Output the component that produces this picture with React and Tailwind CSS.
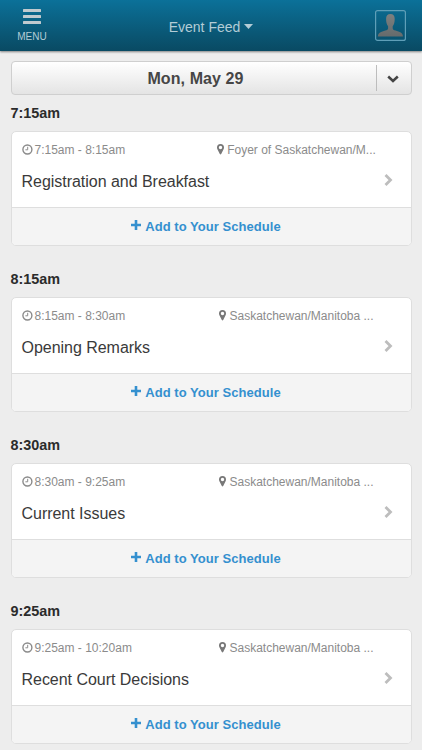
const events = [
    { start: '7:15am', time: '7:15am - 8:15am', place: 'Foyer of Saskatchewan/M...', title: 'Registration and Breakfast' },
    { start: '8:15am', time: '8:15am - 8:30am', place: 'Saskatchewan/Manitoba ...', title: 'Opening Remarks' },
    { start: '8:30am', time: '8:30am - 9:25am', place: 'Saskatchewan/Manitoba ...', title: 'Current Issues' },
    { start: '9:25am', time: '9:25am - 10:20am', place: 'Saskatchewan/Manitoba ...', title: 'Recent Court Decisions' },
]

function ClockIcon() {
    return (
        <svg className="w-[11px] h-[11px] mr-[2px] mb-[2px] shrink-0" viewBox="0 0 11 11" fill="none" stroke="currentColor">
            <circle cx="5.4" cy="5.5" r="4.5" strokeWidth="1.4" />
            <path d="M5.7 2.8v3H3.4" strokeWidth="1" />
        </svg>
    )
}

function PinIcon() {
    return (
        <svg className="w-[7px] h-[11px] mr-[3px] mb-[2px] shrink-0" viewBox="0 0 7 11" fill="#787878">
            <path fillRule="evenodd" d="M3.5 0A3.5 3.5 0 0 0 0 3.5c0 .6.1 1 .3 1.5l2.5 5.1c.3.6 1.1.6 1.4 0L6.700 5c.2-.5.3-.9.3-1.5A3.5 3.5 0 0 0 3.5 0Zm0 1.8a1.7 1.7 0 1 1 0 3.4 1.7 1.7 0 0 1 0-3.4Z" />
        </svg>
    )
}

function Header() {
    return (
        <header className="h-[51px] flex justify-between bg-linear-to-b from-[#0b7199] to-[#094a63] text-[#b3ccd6] shadow-[0_1px_2px_rgba(0,0,0,0.45)]">
            <button className="w-16 pt-[9px] flex flex-col items-center">
                <svg className="w-[18px] h-[15px]" viewBox="0 0 18 15" fill="#c0cacf">
                    <rect width="18" height="3" rx=".6" />
                    <rect y="6" width="18" height="3" rx=".6" />
                    <rect y="12" width="18" height="3" rx=".6" />
                </svg>
                <span className="mt-[7px] text-[10px] leading-[11px]">MENU</span>
            </button>
            <button className="h-[54px] flex items-center text-sm">
                Event Feed
                <svg className="w-[9px] h-[5px] ml-1 mb-[2px]" viewBox="0 0 9 5" fill="currentColor">
                    <path d="M0 0h9L4.5 5Z" />
                </svg>
            </button>
            <div className="w-16 pt-[10px] pl-[17px]">
                <svg className="w-[31px] h-[31px]" viewBox="0 0 31 31" fill="none">
                    <defs>
                        <linearGradient id="person" x1="0" y1="0" x2="0" y2="1">
                            <stop offset="0" stopColor="#7d8080" />
                            <stop offset="1" stopColor="#666b6c" />
                        </linearGradient>
                    </defs>
                    <rect x=".6" y=".6" width="29.8" height="29.8" rx="2" stroke="#5f9fb8" strokeWidth="1.2" />
                    <path fill="url(#person)" d="M15.4 4c-2.900 0-4.300 2-4.300 4.800 0 2.900.5 5.600 2 7.500v1.900c0 1.300-1 1.800-2.800 2.400l-3.600 1.200C4.200 22.600 3 24 2.800 26.400h25.200c-.2-2.400-1.400-3.800-3.900-4.600l-3.600-1.200c-1.800-.6-2.800-1.100-2.800-2.400v-1.900c1.500-1.900 2-4.600 2-7.500C19.700 6 18.300 4 15.4 4Z" />
                </svg>
            </div>
        </header>
    )
}

function DateBar() {
    return (
        <div className="h-[34px] flex items-center rounded-[4px] border border-[#cfcfcf] bg-linear-to-b from-white to-[#e4e4e4]">
            <span className="flex-1 pl-[4px] pt-[2px] text-center text-base font-bold text-[#464646] tracking-[0.1px]">Mon, May 29</span>
            <span className="w-[35px] h-[26px] flex items-center justify-center border-l border-[#bdbdbd]">
                <svg className="w-[12px] h-[8px] mt-[2px] mr-[1px]" viewBox="0 0 12 8" fill="none" stroke="#444" strokeWidth="2.5">
                    <path d="m1.2 1.5 4.800 4.500 4.800-4.500" />
                </svg>
            </span>
        </div>
    )
}

function EventCard({ event }) {
    return (
        <section className="h-[166px]">
            <h2 className="h-[36px] pt-[8px] text-[14.4px] leading-[20px] font-bold text-[#2b2b2b]">{event.start}</h2>
            <div className="h-[115px] rounded-[5px] border border-[#dedede] bg-white overflow-hidden">
                <div className="h-[75px] pl-[10px] pr-[18px] pt-[10px]">
                    <div className="flex items-center text-xs text-[#8b8b8b]">
                        <ClockIcon />
                        <span>{event.time}</span>
                        <span className="w-[158px] ml-auto mr-[17px] flex justify-center items-center whitespace-nowrap">
                            <PinIcon />
                            {event.place}
                        </span>
                    </div>
                    <div className="flex items-center justify-between mt-[12px]">
                        <h3 className="text-base text-[#3a3a3a] tracking-[-0.03px]">{event.title}</h3>
                        <svg className="w-[9px] h-[12px] mb-[5px]" viewBox="0 0 9 12" fill="none" stroke="#bdbdbd" strokeWidth="2.8">
                            <path d="m1.5 1 5 5-5 5" />
                        </svg>
                    </div>
                </div>
                <button className="w-full h-[38px] pr-[10px] flex items-center justify-center border-t border-[#dedede] bg-[#f4f4f4] text-[13px] font-bold text-[#3490cf] tracking-[0.05px]">
                    <svg className="w-[10px] h-[10px] mr-1 mb-[3px]" viewBox="0 0 10 10" fill="none" stroke="currentColor" strokeWidth="2.6">
                        <path d="M5 0v10M0 5h10" />
                    </svg>
                    Add to Your Schedule
                </button>
            </div>
        </section>
    )
}

export default function App() {
    return (
        <div className="h-[750px] overflow-hidden bg-[#ededed] font-['Liberation_Sans',Arial,sans-serif]">
            <Header />
            <main className="pt-[10px] pl-[10.5px] pr-[10.5px]">
                <DateBar />
                {events.map((event) => (
                    <EventCard key={event.start} event={event} />
                ))}
            </main>
        </div>
    )
}
